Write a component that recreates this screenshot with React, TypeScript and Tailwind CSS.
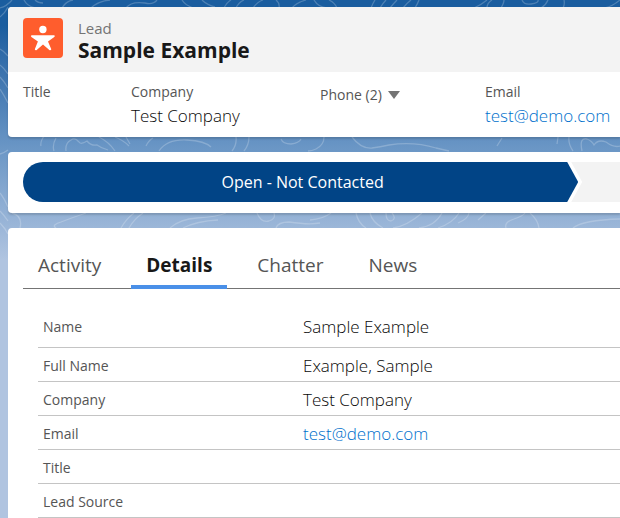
import type { ReactNode } from "react"

const tabs = ["Activity", "Details", "Chatter", "News"]

const fields: { label: string; value?: string; email?: boolean }[] = [
  { label: "Name", value: "Sample Example" },
  { label: "Full Name", value: "Example, Sample" },
  { label: "Company", value: "Test Company" },
  { label: "Email", value: "test@demo.com", email: true },
  { label: "Title" },
  { label: "Lead Source" },
]

function Contours() {
  return (
    <svg
      className="absolute inset-x-0 top-0 h-[260px] w-full"
      viewBox="0 0 620 260"
      preserveAspectRatio="xMinYMin slice"
      fill="none"
      stroke="#ffffff"
      strokeOpacity="0.22"
      strokeWidth="1.3"
      aria-hidden="true"
    >
      <path d="M0 8Q7 6 12 0M0 17Q5 13 8 7M0 49q4 2 8 7M0 65q4 3 8 9M0 77q4 4 8 11M0 89q4 6 8 14M0 154q4-1 8-4M0 193q4 5 8 14M0 211q4 4 8 10M0 223q5 5 8 11" />
      <path d="M24 0q3 6 11 8M35 0q3 3 8 3M62 8Q66 1 73 0M91 8Q98 1 110 0M126 8Q131 1 145 3q8 2 12-3M182 0q3 5 11 8M202 0q5 5 13 7M224 8Q227 2 231 0M236 8Q239 2 244 0M253 8Q257 2 263 0M279 8Q280 3 276 0M292 8Q296 3 306 0" />
      <path d="M314 0q4 7 13 8M337 8Q335 3 329 0M371 8Q373 3 375 0M380 8Q383 3 386 0M390 8Q394 3 397 0M403 8Q407 3 411 0M415 8Q418 3 419 0M474 8Q481 5 487 0M487 8Q487 3 492 0M501 8Q504 3 504 0M522 0q2 5 9 4q8-1 7-4M541 8Q546 5 548 0M564 0q1 5-1 8M605 8q8-2 15-8" />
      <path d="M44 136q-4 6-3 10M56 138q-4 7-2 13M66 151q-1-8 5-11q4-3 8 2q2 3 8-1q4 5 10 4q4 3 11 5M99 137q10 5 16 14M115 137q8 3 14 9M126 137l4 7M146 146q3-6 7-8M159 151q8-12 28-11q18 1 24 7M236 137q1 8-4 14M249 137q0 8-5 14M281 139q2 5 10 5q8-1 10-5" />
      <path d="M324 137q0 8-8 12q-4 2-8 2M352 137q9 12 20 11q8-1 17-3q24-4 47 3l13 3M497 146l5-8M557 144l1-7M569 137q-1 7 4 14M582 151q-3-14 5-12q5 2 7 6q4-6 12-3q8 6 14 4" />
      <path d="M12 213q11 3 8 15M56 228q-5-3 5-6q13-5 25-9M121 228q5-9 13-15M129 228q5-9 14-15M170 228q10-9 27-10q20-1 29-5M183 228q14-7 35-8M257 213q4 10 12 8q7-2 5-8M276 228q2-6 13-6q20 3 31 1" />
      <path d="M310 220q13-1 21-7M356 213q2 10 10 15M370 213q2 9 13 15M386 213q0 8 5 8q6-2 1-8M393 228q14-2 29-15M419 228q16-2 23-15M438 228q15-5 21-15M469 213q-1 6-11 10M478 220l8-7M506 228q-2-6 8-9q9-3 11-6M530 213q8 7 9 15M573 228q10-8 47-9" />
    </svg>
  )
}

function LeadIcon() {
  return (
    <svg className="size-10 shrink-0" viewBox="0 0 40 40" aria-hidden="true">
      <rect width="40" height="40" rx="4" fill="#ff5d2d" />
      <circle cx="19.9" cy="11.5" r="3.7" fill="#fff" />
      <path
        d="M8.600 17.200H31.200Q32.500 17.900 31.300 19L25 23.600 28.300 31.200Q27.800 32.700 26.300 32L20 26.400 13.700 32Q12.200 32.700 11.800 31.200L14.900 23.600 8.400 19Q7.300 17.900 8.600 17.200Z"
        fill="#fff"
      />
    </svg>
  )
}

function HighlightItem({ label, children }: { label: string; children?: ReactNode }) {
  return (
    <div>
      <dt className="text-[14px] leading-5 font-normal text-[#555555]">{label}</dt>
      <dd className="text-[17px] leading-7 text-[#080808]">{children}</dd>
    </div>
  )
}

function EmailLink() {
  return (
    <a href="mailto:test@demo.com" className="text-[#0070cc] hover:underline">
      test@demo.com
    </a>
  )
}

export default function App() {
  return (
    <div className="relative min-h-screen overflow-hidden bg-[#b0c4e0] font-['Open_Sans','Noto_Sans',sans-serif] font-light">
      <div className="absolute inset-x-0 top-0 h-[260px] bg-linear-to-b from-[#1a5d9f] from-10% via-[#6794c4] via-55% to-[#b0c4e0]" />
      <Contours />
      <main className="relative flex flex-col gap-[15px] pt-[7px] pl-2">
        <header className="overflow-hidden rounded-l-[4px] bg-white shadow-[0_2px_2px_rgba(0,0,0,0.15)]">
          <div className="flex items-start gap-[15px] bg-[#f3f3f3] px-[15px] pt-[11px] pb-[10px]">
            <LeadIcon />
            <div>
              <p className="text-[15px] leading-5 font-normal text-[#747474]">Lead</p>
              <h1 className="text-[21px] leading-6 font-bold text-[#181818]">Sample Example</h1>
            </div>
          </div>
          <dl className="grid grid-cols-[108px_189px_165px_1fr] px-[15px] pt-[10px] pb-[7px]">
            <HighlightItem label="Title" />
            <HighlightItem label="Company">Test Company</HighlightItem>
            <div>
              <button
                type="button"
                className="flex items-center gap-1.5 pt-[3px] text-[14px] leading-5 font-normal text-[#555555]"
              >
                Phone (2)
                <svg className="h-2 w-3" viewBox="0 0 12 8" fill="#747474" aria-hidden="true">
                  <path d="M0 0h12L6 8Z" />
                </svg>
              </button>
            </div>
            <HighlightItem label="Email">
              <EmailLink />
            </HighlightItem>
          </dl>
        </header>

        <section className="rounded-l-[4px] bg-white pt-[10px] pb-[11px] pl-[15px] shadow-[0_2px_2px_rgba(0,0,0,0.15)]">
          <div className="flex h-10">
            <button
              type="button"
              className="w-[93%] rounded-l-full bg-[#014486] pl-1 text-[16px] leading-5 font-normal text-white [clip-path:polygon(0_0,calc(100%-11px)_0,100%_50%,calc(100%-11px)_100%,0_100%)]"
            >
              Open - Not Contacted
            </button>
            <div className="-ml-[7px] flex-1 bg-[#f3f3f3] [clip-path:polygon(0_0,100%_0,100%_100%,0_100%,11px_50%)]" />
          </div>
        </section>

        <section className="grow rounded-l-[4px] bg-white pb-4 pl-[15px]">
          <div role="tablist" className="flex gap-[15px] border-b border-[#747474] pt-4">
            {tabs.map((tab) => (
              <button
                key={tab}
                type="button"
                role="tab"
                aria-selected={tab === "Details"}
                className={
                  tab === "Details"
                    ? "-mb-px border-b-4 border-[#4a90e8] px-[15px] pt-[7px] pb-1.5 text-[19px] leading-7 font-bold text-[#181818]"
                    : "px-[15px] pt-[7px] pb-[9px] text-[19px] leading-7 font-normal text-[#555555]"
                }
              >
                {tab}
              </button>
            ))}
          </div>
          <dl className="pt-[21px] pl-[15px]">
            {fields.map((field) => (
              <div
                key={field.label}
                className="grid h-[34px] grid-cols-[260px_1fr] items-center border-b border-[#c4c4c4] pt-[2px] pl-[5px] first:h-[38px] first:pb-[5px]"
              >
                <dt className="text-[14px] leading-5 font-normal text-[#555555]">{field.label}</dt>
                <dd className="text-[17px] leading-6 text-[#080808]">
                  {field.email ? <EmailLink /> : field.value}
                </dd>
              </div>
            ))}
          </dl>
        </section>
      </main>
    </div>
  )
}
